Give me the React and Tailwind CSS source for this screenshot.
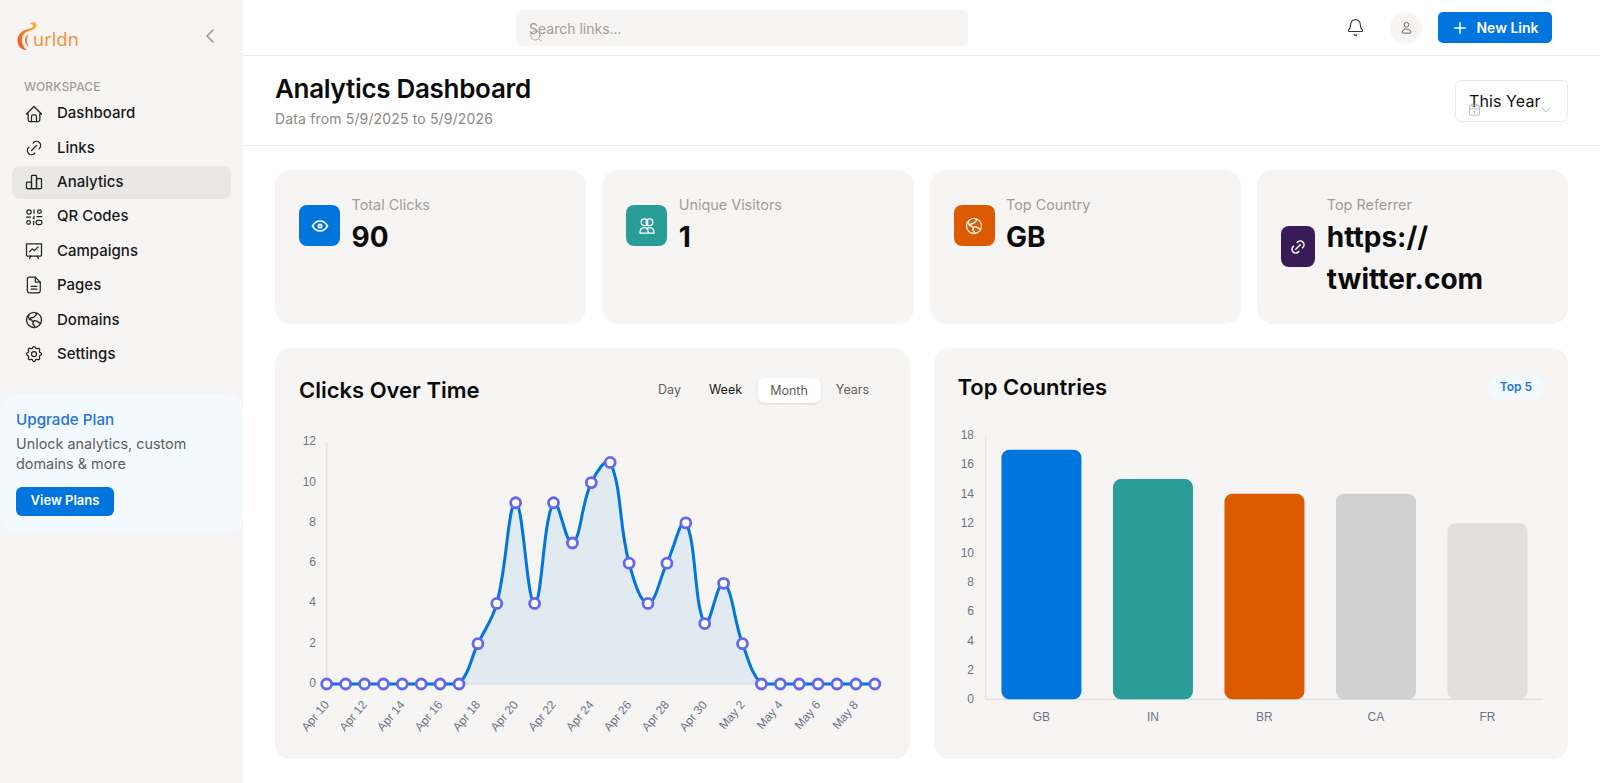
import { Bell, ChevronDown, ChevronLeft, Plus, Search } from "lucide-react";
import { PiGlobeHemisphereWest } from "react-icons/pi";
import { TbCalendar, TbChartBar, TbEye, TbHome, TbLink, TbSettings } from "react-icons/tb";

const clicks = [0, 0, 0, 0, 0, 0, 0, 0, 2, 4, 9, 4, 9, 7, 10, 11, 6, 4, 6, 8, 3, 5, 2, 0, 0, 0, 0, 0, 0, 0];
const dayLabels = ["Apr 10", "Apr 12", "Apr 14", "Apr 16", "Apr 18", "Apr 20", "Apr 22", "Apr 24", "Apr 26", "Apr 28", "Apr 30", "May 2", "May 4", "May 6", "May 8"];
const countries = [
  { code: "GB", value: 17, color: "#0075de" },
  { code: "IN", value: 15, color: "#2a9d99" },
  { code: "BR", value: 14, color: "#dd5b00" },
  { code: "CA", value: 14, color: "#d1d1d1" },
  { code: "FR", value: 12, color: "#e1e0de" },
];

function QrIcon({ className }) {
  return (
    <svg viewBox="0 0 24 24" fill="none" stroke="currentColor" strokeWidth="1.5" strokeLinecap="round" className={className}>
      <circle cx="6" cy="6" r="2.6" />
      <circle cx="18.5" cy="5.5" r="2.2" />
      <circle cx="5.5" cy="18.5" r="2.2" />
      <rect x="14.5" y="16" width="7" height="5" rx="2.2" />
      <path d="M12 3.5v4M3 12h5M12 11v2.5h-1M15.5 11.5h6" />
      <path d="M11.5 17v4" />
    </svg>
  );
}

function BoardIcon({ className }) {
  return (
    <svg viewBox="0 0 24 24" fill="none" stroke="currentColor" strokeWidth="1.5" strokeLinecap="round" strokeLinejoin="round" className={className}>
      <path d="M3 3.500h18v13.500a1 1 0 0 1-1 1H4a1 1 0 0 1-1-1z" />
      <path d="M6.500 13l3.500-3.500 2.500 2 4.500-4.500" />
      <path d="M8.500 18l-2 3M15.500 18l2 3" />
    </svg>
  );
}

function PageIcon({ className }) {
  return (
    <svg viewBox="0 0 24 24" fill="none" stroke="currentColor" strokeWidth="1.5" strokeLinecap="round" strokeLinejoin="round" className={className}>
      <path d="M6.500 2.500h7l6 6v10.500a2.500 2.500 0 0 1-2.500 2.500H6.500A2.500 2.500 0 0 1 4 19V5a2.500 2.500 0 0 1 2.500-2.500z" />
      <path d="M13.500 2.500v6h6" />
      <path d="M8.500 13.500h7M8.500 17h7" />
    </svg>
  );
}

function VisitorsIcon({ className }) {
  return (
    <svg viewBox="0 0 24 24" fill="none" stroke="currentColor" strokeWidth="1.5" strokeLinejoin="round" className={className}>
      <circle cx="9" cy="7.5" r="4" />
      <circle cx="15" cy="7.5" r="4" />
      <path d="M3.500 20.500c0-4 2.400-6.500 5.500-6.500 1.300 0 2.300.4 3 1 .7-.6 1.700-1 3-1 3.100 0 5.500 2.500 5.500 6.500z" />
      <path d="M12 15c1 1 1.700 3 1.700 5.500" />
    </svg>
  );
}

function UserIcon({ className }) {
  return (
    <svg viewBox="0 0 24 24" fill="none" stroke="currentColor" strokeWidth="1.5" strokeLinejoin="round" className={className}>
      <circle cx="12" cy="7.5" r="3.700" />
      <path d="M5 20c0-3.500 3-5.500 7-5.500s7 2 7 5.500c0 .6-.4 1-1 1H6c-.6 0-1-.4-1-1z" />
    </svg>
  );
}

function Logo() {
  return (
    <div className="flex items-end h-[30px] w-[64px]">
      <svg viewBox="0 0 20 30" className="w-5 h-[30px] shrink-0">
        <defs>
          <linearGradient id="swirl" x1="0" y1="1" x2="1" y2="0">
            <stop offset="0" stopColor="#f2542d" />
            <stop offset="0.6" stopColor="#f98a22" />
            <stop offset="1" stopColor="#fbb03b" />
          </linearGradient>
        </defs>
        <path d="M10 29C3 29 .5 24 .5 19.500.5 13 5 9.500 11 8c3-.8 5-1.500 5.500-3-.5-1.500-2-2-3.500-2 2-2.500 6-2.500 6.500.5.500 3.500-3.500 5.500-7.500 6.500-4 1-7 4.500-7 9 0 4.500 2 8 5 10z" fill="url(#swirl)" />
        <path d="M12 26c-2.500-1.500-4-4-4-7 0-3 1.500-5 3.500-6.500-1 2.500-1.500 4.500-1.500 7 0 2.500 1 5 2 6.500z" fill="url(#swirl)" />
      </svg>
      <span className="font-['Open_Sans',sans-serif] text-[18px] leading-[24px] font-medium tracking-[0.2px] text-[#f68a2b] -ml-1">urldn</span>
    </div>
  );
}

function NavItem({ icon: Icon, label, active }) {
  return (
    <a className={`flex items-center gap-[13px] h-[33px] mb-[1.4px] pl-3 rounded-lg text-[15px] font-medium text-[#191919] ${active ? "bg-[#e9e8e6]" : ""}`}>
      <Icon className="w-5 h-5 text-[#222222]" strokeWidth={1.5} />
      {label}
    </a>
  );
}

function Sidebar() {
  return (
    <aside className="w-[243px] shrink-0 h-screen bg-[#f6f5f4]">
      <div className="flex items-start justify-between pl-[17px] pr-[21px] pt-[21px] h-[79px]">
        <Logo />
        <ChevronLeft className="w-6 h-6 text-[#8f8c88] mt-[3px]" strokeWidth={1.2} />
      </div>
      <p className="pl-6 text-[12px] leading-4 font-medium tracking-[0.1px] text-[#a39e98]">WORKSPACE</p>
      <nav className="px-3 mt-[2px]">
        <NavItem icon={TbHome} label="Dashboard" />
        <NavItem icon={TbLink} label="Links" />
        <NavItem icon={TbChartBar} label="Analytics" active />
        <NavItem icon={QrIcon} label="QR Codes" />
        <NavItem icon={BoardIcon} label="Campaigns" />
        <NavItem icon={PageIcon} label="Pages" />
        <NavItem icon={PiGlobeHemisphereWest} label="Domains" />
        <NavItem icon={TbSettings} label="Settings" />
      </nav>
      <div className="mt-[23px] h-[139px] rounded-2xl bg-[#f2f9ff] px-4 pt-[14px]">
        <p className="text-[15.2px] leading-6 font-medium text-[#1f74d8]">Upgrade Plan</p>
        <p className="mt-[2px] text-[14.4px] leading-[20.4px] text-[#615d59]">Unlock analytics, custom domains &amp; more</p>
        <button className="mt-3 w-[98px] h-[29px] rounded-md bg-[#0075de] text-[13px] font-semibold text-white">View Plans</button>
      </div>
    </aside>
  );
}

function TopBar() {
  return (
    <header className="h-[56px] flex items-center border-b border-[#e9e9e7] pr-[48px]">
      <div className="relative ml-[273px] w-[452px] h-9 rounded-md bg-[#f6f5f4] pl-[13px] pt-[2px] flex items-center text-[14px] text-[#a39e98]">
        Search links...
        <Search className="absolute left-[13px] top-[19px] w-[14px] h-[14px] text-[#8a8784]" strokeWidth={1.25} />
      </div>
      <Bell className="ml-auto w-[19px] h-[19px] text-[#33312f]" strokeWidth={1.4} />
      <div className="ml-[25px] w-8 h-8 rounded-full bg-[#f6f5f4] flex items-center justify-center">
        <UserIcon className="w-[15px] h-[15px] text-[#615d59]" />
      </div>
      <button className="ml-4 w-[114px] h-[31px] rounded-[5px] bg-[#0075de] text-white text-[14px] font-semibold flex items-center justify-center gap-[7px]">
        <Plus className="w-[18px] h-[18px]" strokeWidth={2} />
        New Link
      </button>
    </header>
  );
}

function PageHeader() {
  return (
    <div className="h-[90px] flex items-start justify-between border-b border-[#efefed] pl-8 pr-8">
      <div className="pt-4">
        <h1 className="text-[26px] leading-[34px] font-semibold tracking-[-0.3px] text-[#0a0a0a]">Analytics Dashboard</h1>
        <p className="mt-[3px] text-[14px] leading-5 tracking-[0.15px] text-[#8c8985]">Data from 5/9/2025 to 5/9/2026</p>
      </div>
      <div className="relative mt-6 w-[113px] h-[42px] rounded-md border border-[#e8e8e6] pl-[13px] pt-[8px] text-[16px] leading-6 tracking-[0.1px] text-[#111111]">
        This Year
        <TbCalendar className="absolute left-[11px] top-[21px] w-[15px] h-[15px] text-[#b5b3b0]" strokeWidth={1.4} />
        <ChevronDown className="absolute right-[13px] top-[21px] w-4 h-4 text-[#b5b3b0]" strokeWidth={1.3} />
      </div>
    </div>
  );
}

function StatCard({ icon: Icon, iconSize, tone, label, children }) {
  return (
    <div className="rounded-2xl bg-[#f6f5f4] p-6 flex items-start">
      <div className="flex items-center gap-[11.5px] min-w-0">
        <div className={`w-[41px] h-[41px] rounded-lg flex items-center justify-center text-white ${tone}`}>
          <Icon className={iconSize} />
        </div>
        <div>
          <p className="text-[14.4px] leading-[21.6px] text-[#a39e98]">{label}</p>
          <p className="text-[28px] leading-[42px] font-bold text-[#0a0a0a]">{children}</p>
        </div>
      </div>
    </div>
  );
}

function smoothLine(points, floor) {
  let d = `M${points[0][0]} ${points[0][1]}`;
  const ctrl = points.map((p, i) => {
    const prev = points[i - 1] || p;
    const next = points[i + 1] || p;
    const a = Math.hypot(p[0] - prev[0], p[1] - prev[1]);
    const b = Math.hypot(next[0] - p[0], next[1] - p[1]);
    const sum = a + b || 1;
    const dx = next[0] - prev[0];
    const dy = next[1] - prev[1];
    return {
      before: [p[0] - 0.4 * (a / sum) * dx, Math.min(p[1] - 0.4 * (a / sum) * dy, floor)],
      after: [p[0] + 0.4 * (b / sum) * dx, Math.min(p[1] + 0.4 * (b / sum) * dy, floor)],
    };
  });
  for (let i = 1; i < points.length; i++) {
    const c1 = ctrl[i - 1].after;
    const c2 = ctrl[i].before;
    d += ` C${c1[0]} ${c1[1]} ${c2[0]} ${c2[1]} ${points[i][0]} ${points[i][1]}`;
  }
  return d;
}

function ClicksChart() {
  const x0 = 27.7;
  const step = 18.9;
  const y0 = 264;
  const unit = 20.14;
  const points = clicks.map((v, i) => [x0 + i * step, y0 - v * unit]);
  const line = smoothLine(points, y0);
  const area = `${line} L${points[points.length - 1][0]} ${y0} L${x0} ${y0} Z`;

  return (
    <svg width="586" height="330" className="mt-3 block overflow-visible">
      {[0, 2, 4, 6, 8, 10, 12].map((v) => (
        <g key={v}>
          <line x1={x0} x2="586" y1={y0 - v * unit} y2={y0 - v * unit} stroke="#000000" strokeOpacity="0.008" />
          <text x="17" y={y0 - v * unit + 3} textAnchor="end" fontSize="12" fontFamily="Liberation Sans, sans-serif" fill="#6b7489">{v}</text>
        </g>
      ))}
      <line x1={x0} x2={x0} y1={y0 - 12 * unit} y2={y0} stroke="#e3e3e3" strokeWidth="1.5" />
      <path d={area} fill="#0075de" fillOpacity="0.08" />
      <line x1={x0} x2={points[points.length - 1][0]} y1={y0} y2={y0} stroke="#d5dde8" />
      <path d={line} fill="none" stroke="#0075de" strokeWidth="3" />
      {points.map((p, i) => (
        <circle key={i} cx={p[0]} cy={p[1]} r="5" fill="#ffffff" stroke="#6366f1" strokeWidth="2.800" />
      ))}
      {dayLabels.map((label, i) => {
        const x = x0 + i * 2 * step + 3;
        return (
          <text key={label} x={x} y="285" textAnchor="end" fontSize="12" fontFamily="Liberation Sans, sans-serif" fill="#6b7489" transform={`rotate(-50 ${x} 285)`}>{label}</text>
        );
      })}
    </svg>
  );
}

function CountriesChart() {
  const x0 = 27.7;
  const y0 = 279.3;
  const unit = 14.68;
  const band = 111.5;

  return (
    <svg width="586" height="320" className="mt-[18px] block overflow-visible">
      {[0, 2, 4, 6, 8, 10, 12, 14, 16, 18].map((v) => (
        <g key={v}>
          <line x1={x0} x2="585" y1={y0 - v * unit} y2={y0 - v * unit} stroke="#000000" strokeOpacity="0.008" />
          <text x="16" y={y0 - v * unit + 4} textAnchor="end" fontSize="12" fontFamily="Liberation Sans, sans-serif" fill="#6b7489">{v}</text>
        </g>
      ))}
      <line x1={x0} x2={x0} y1={y0 - 18 * unit} y2={y0} stroke="#e3e3e3" />
      <line x1={x0} x2="585" y1={y0} y2={y0} stroke="#d9d8d6" />
      {countries.map((c, i) => {
        const cx = x0 + band * i + band / 2;
        const h = c.value * unit;
        return (
          <g key={c.code}>
            <rect x={cx - 40} y={y0 - h} width="80" height={h} rx="8" fill={c.color} />
            <text x={cx} y="301" textAnchor="middle" fontSize="12" fontFamily="Liberation Sans, sans-serif" fill="#6b7489">{c.code}</text>
          </g>
        );
      })}
    </svg>
  );
}

export default function App() {
  return (
    <div className="flex h-screen overflow-hidden bg-white font-['Inter',sans-serif]">
      <Sidebar />
      <div className="flex-1 min-w-0">
        <TopBar />
        <PageHeader />
        <main className="px-8 pt-6">
          <div className="grid grid-cols-4 gap-4 h-[153px]">
            <StatCard icon={TbEye} iconSize="w-5 h-5" tone="bg-[#0075de]" label="Total Clicks">90</StatCard>
            <StatCard icon={VisitorsIcon} iconSize="w-5 h-5" tone="bg-[#2a9d99]" label="Unique Visitors">1</StatCard>
            <StatCard icon={PiGlobeHemisphereWest} iconSize="w-5 h-5" tone="bg-[#dd5b00]" label="Top Country">GB</StatCard>
            <StatCard icon={TbLink} iconSize="w-[18px] h-[18px]" tone="bg-[#391c57]" label="Top Referrer">https://<wbr />twitter.com</StatCard>
          </div>
          <div className="grid grid-cols-2 gap-6 mt-[25px]">
            <section className="h-[411px] rounded-2xl bg-[#f6f5f4] p-6">
              <div className="flex items-center justify-between h-9">
                <h2 className="text-[22px] font-semibold text-[#0a0a0a]">Clicks Over Time</h2>
                <div className="flex items-center text-[12.5px] text-[#615d59] mr-px">
                  <span className="w-12 text-center">Day</span>
                  <span className="w-16 text-center text-[#191919]">Week</span>
                  <span className="w-[63px] h-[25px] leading-[25px] text-center rounded-md bg-white shadow-sm">Month</span>
                  <span className="w-16 text-center">Years</span>
                </div>
              </div>
              <ClicksChart />
            </section>
            <section className="h-[411px] rounded-2xl bg-[#f6f5f4] p-6">
              <div className="flex items-center justify-between h-[30px]">
                <h2 className="text-[22px] font-semibold text-[#0a0a0a]">Top Countries</h2>
                <span className="w-[56px] h-6 rounded-full bg-[#f2f9ff] text-[12px] leading-6 text-center font-semibold text-[#1f74d8]">Top 5</span>
              </div>
              <CountriesChart />
            </section>
          </div>
        </main>
      </div>
    </div>
  );
}
